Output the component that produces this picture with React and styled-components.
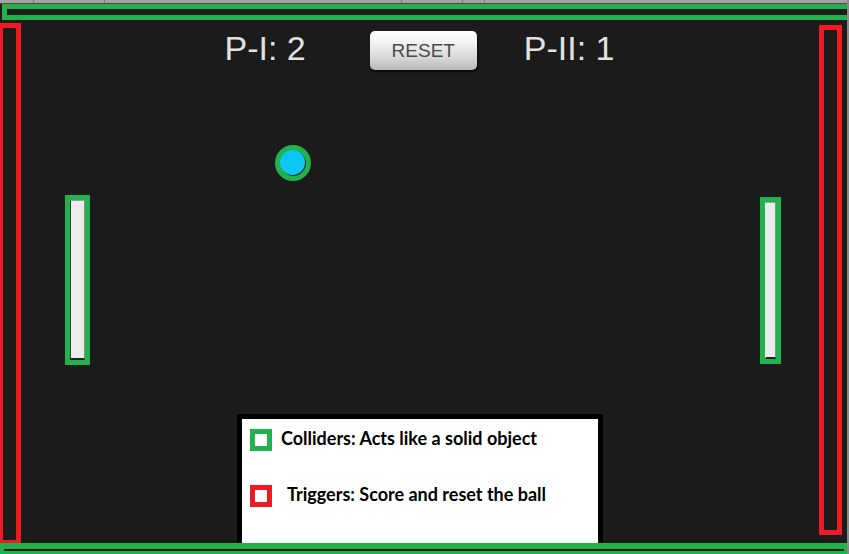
import styled, { createGlobalStyle } from "styled-components";

const GREEN = "#22b14c";
const RED = "#ed1c24";

const GlobalStyle = createGlobalStyle`
    html, body {
        margin: 0;
        padding: 0;
        background: #1b1b1b;
        overflow: hidden;
    }
    `;

const Screen = styled.div`
    position: relative;
    box-sizing: border-box;
    width: 849px;
    height: 554px;
    display: flex;
    flex-direction: column;
    background: #1b1b1b;
    border-right: 2px solid #8a8a8a;
    overflow: hidden;
    font-family: "Liberation Sans", Arial, sans-serif;
    `;

const TopStrip = styled.div`
    display: flex;
    height: 3px;
    background: #a3a3a3;
    border-bottom: 1px solid #4a4a4a;
    `;

const StripCell = styled.div`
    width: ${(p) => p.$w}px;
    border-right: 1px solid #7a7a7a;
    `;

const Hud = styled.div`
    display: flex;
    align-items: flex-start;
    justify-content: center;
    padding-right: 8px;
    margin-top: 27px;
    `;

const Score = styled.div`
    font-size: 34px;
    line-height: 34px;
    color: #e2e2e2;
    margin-right: ${(p) => p.$gap || 0}px;
    margin-left: ${(p) => p.$lead || 0}px;
    `;

const ResetButton = styled.button`
    width: 107px;
    height: 39px;
    padding: 0;
    border: none;
    border-radius: 5px;
    background: linear-gradient(#ffffff 0%, #f3f3f3 30%, #d6d6d6 70%, #b8b8b8 100%);
    box-shadow: 1px 2px 2px rgba(0, 0, 0, 0.7);
    color: #4a4a4a;
    font-family: "Liberation Sans", Arial, sans-serif;
    font-size: 19px;
    cursor: pointer;
    `;

const Collider = styled.div`
    position: absolute;
    box-sizing: border-box;
    left: ${(p) => p.$x}px;
    top: ${(p) => p.$y}px;
    width: ${(p) => p.$w}px;
    height: ${(p) => p.$h}px;
    border: ${(p) => p.$b || 5}px solid ${(p) => (p.$trigger ? RED : GREEN)};
    display: flex;
    `;

const PaddleBody = styled.div`
    flex: 1;
    box-sizing: border-box;
    background: #ebebeb;
    border-left: 1px solid ${(p) => (p.$side === "left" ? "#3a3a3a" : "#ebebeb")};
    border-right: 1px solid #8a8a8a;
    border-top: 1px solid #9a9a9a;
    border-bottom: 2px solid #222;
    `;

const BallRing = styled.div`
    position: absolute;
    left: ${(p) => p.$x}px;
    top: ${(p) => p.$y}px;
    width: 36px;
    height: 36px;
    border-radius: 50%;
    background: ${GREEN};
    display: flex;
    align-items: center;
    justify-content: center;
    `;

const BallCore = styled.div`
    width: 25px;
    height: 25px;
    margin: 0 2px 2px 0;
    border-radius: 50%;
    background: #0cc6f6;
    box-shadow: 1px 1px 0 #1c3b30;
    `;

const Legend = styled.div`
    box-sizing: border-box;
    width: 366px;
    height: 134px;
    margin: auto 0 6px 237px;
    border: 5px solid #000;
    background: #fff;
    padding: 10px 8px;
    display: flex;
    flex-direction: column;
    gap: 34px;
    `;

const LegendRow = styled.div`
    display: flex;
    align-items: center;
    height: 22px;
    `;

const Swatch = styled.span`
    box-sizing: border-box;
    width: 22px;
    height: 22px;
    flex: none;
    border: 5px solid ${(p) => p.$color};
    background: #fff;
    `;

const LegendText = styled.span`
    margin-left: ${(p) => p.$indent}px;
    margin-top: -4px;
    font-family: Lato, "Open Sans", sans-serif;
    font-weight: 700;
    font-size: 18px;
    color: #000;
    white-space: nowrap;
    `;

function App() {
    return (
        <>
            <GlobalStyle />
            <Screen>
                <TopStrip>
                    <StripCell $w={33} />
                    <StripCell $w={70} />
                    <StripCell $w={296} />
                    <StripCell $w={60} />
                    <StripCell $w={21} />
                </TopStrip>

                <Hud>
                    <Score $gap={64}>P-I: 2</Score>
                    <ResetButton type="button">RESET</ResetButton>
                    <Score $lead={47}>P-II: 1</Score>
                </Hud>

                {/* walls */}
                <Collider $x={2} $y={4} $w={850} $h={16} />
                <Collider $trigger $x={-2} $y={23} $w={23} $h={522} />
                <Collider $trigger $x={819} $y={25} $w={23} $h={510} />

                {/* paddles */}
                <Collider $x={65} $y={195} $w={25} $h={170}>
                    <PaddleBody $side="left" />
                </Collider>
                <Collider $x={760} $y={197} $w={21} $h={167}>
                    <PaddleBody $side="right" />
                </Collider>

                <BallRing $x={275} $y={145}>
                    <BallCore />
                </BallRing>

                <Legend>
                    <LegendRow>
                        <Swatch $color={GREEN} />
                        <LegendText $indent={9}>Colliders: Acts like a solid object</LegendText>
                    </LegendRow>
                    <LegendRow>
                        <Swatch $color={RED} />
                        <LegendText $indent={15}>Triggers: Score and reset the ball</LegendText>
                    </LegendRow>
                </Legend>

                <Collider $x={-2} $y={543} $w={852} $h={14} $b={6} />
            </Screen>
        </>
    );
}

export default App;
